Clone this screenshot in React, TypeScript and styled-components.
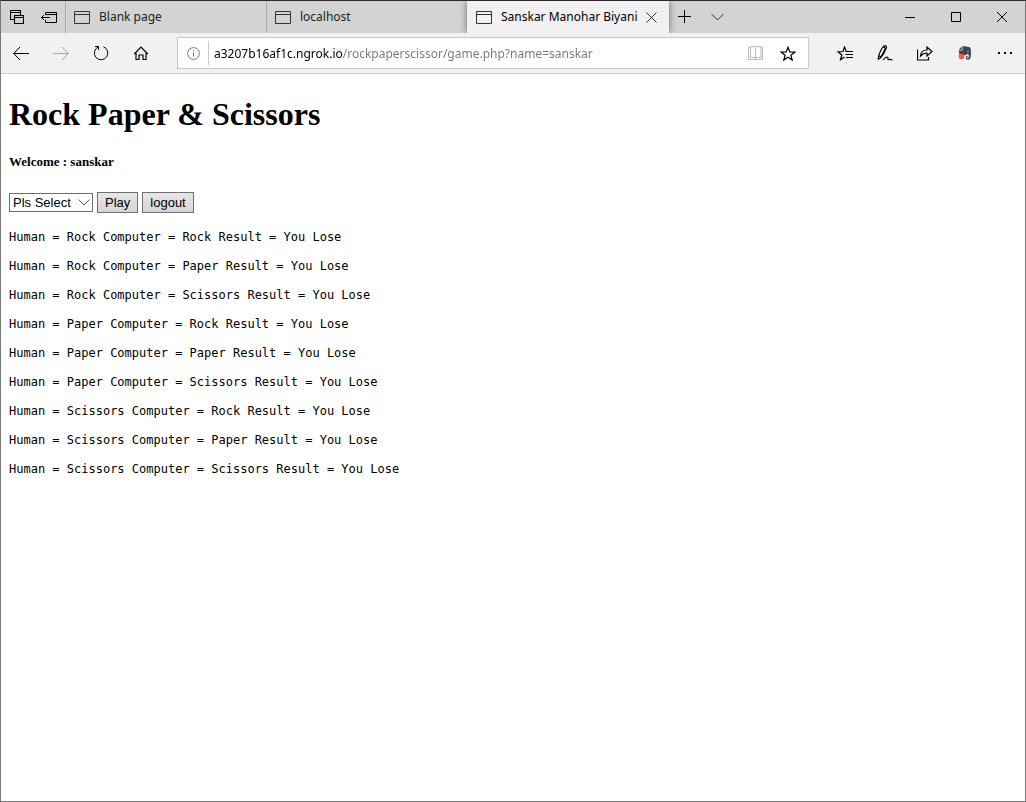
import React from "react";
import styled, { createGlobalStyle } from "styled-components";

const GlobalStyle = createGlobalStyle`
  *, *::before, *::after { box-sizing: border-box; }
  body { margin: 0; background: #fff; }
  button, input, select { margin: 0; font: inherit; color: inherit; }
`;

const Window = styled.div`
  display: flex;
  flex-direction: column;
  min-height: 100vh;
  border: 1px solid #777;
  border-top-color: #2b272b;
  background: #fff;
`;

const TitleBar = styled.header`
  display: flex;
  height: 32px;
  background: #d3d3d3;
  color: #000;
  font: 12px/16px "Noto Sans", "Open Sans", sans-serif;
`;

const TabList = styled.nav`
  display: flex;
  min-width: 0;
`;

const Tab = styled.div<{ $active?: boolean }>`
  display: flex;
  align-items: center;
  flex: 0 1 auto;
  width: ${(p) => (p.$active ? 202 : 201)}px;
  min-width: 0;
  padding-right: 5px;
  border-left: 1px solid ${(p) => (p.$active ? "#f1f1f1" : "#aaa")};
  background: ${(p) => (p.$active ? "#f1f1f1" : "transparent")};
  box-shadow: ${(p) => (p.$active ? "0 0 7px rgba(0, 0, 0, 0.5)" : "none")};
  clip-path: ${(p) => (p.$active ? "inset(0 -10px)" : "none")};
  color: ${(p) => (p.$active ? "#000" : "#222")};
`;

const TabButton = styled.button`
  display: flex;
  align-items: center;
  flex: 1;
  gap: 9px;
  min-width: 0;
  height: 100%;
  padding: 0 0 0 8px;
  border: 0;
  background: none;
  text-align: left;

  svg { flex: none; }
`;

const TabTitle = styled.span`
  flex: 1;
  overflow: hidden;
  white-space: nowrap;
`;

const IconButton = styled.button<{ $width: number; $muted?: boolean }>`
  display: flex;
  align-items: center;
  justify-content: center;
  flex: none;
  width: ${(p) => p.$width}px;
  height: 100%;
  padding: 0;
  border: 0;
  background: none;
  color: ${(p) => (p.$muted ? "#a5a5a5" : "#000")};
`;

const WindowControls = styled.div`
  display: flex;
  margin-left: auto;
`;

const Toolbar = styled.div`
  display: flex;
  align-items: center;
  gap: 16px;
  height: 41px;
  border-bottom: 1px solid #ccc;
  background: #f1f1f1;
`;

const ToolGroup = styled.div`
  display: flex;
  height: 100%;
`;

const AddressBar = styled.form`
  display: flex;
  align-items: center;
  flex: 1;
  min-width: 0;
  height: 32px;
  border: 1px solid #c8c8c8;
  background: #fff;
`;

const AddressInput = styled.input`
  flex: 1;
  min-width: 0;
  height: 24px;
  padding: 0 0 0 5px;
  border: 0;
  border-left: 1px solid #ccc;
  outline: 0;
  background: linear-gradient(to right, #000 134px, #767676 134px);
  background-clip: text;
  -webkit-background-clip: text;
  -webkit-text-fill-color: transparent;
  font: 12px/16px "Noto Sans", "Open Sans", sans-serif;
`;

const Page = styled.main`
  flex: 1;
  padding: 21px 8px;
  color: #000;
  font-family: "Liberation Serif", serif;
`;

const Heading = styled.h1`
  margin: 0 0 21px;
  font-size: 32px;
  line-height: 38px;
`;

const Welcome = styled.h2`
  margin: 0 0 22px;
  font-size: 13px;
  line-height: 16px;
`;

const GameForm = styled.form`
  display: flex;
  align-items: center;
  gap: 4px;
  margin-bottom: 16px;
  font: 13px/15px "Liberation Sans", sans-serif;
`;

const SelectBox = styled.div`
  position: relative;
  display: flex;

  svg {
    position: absolute;
    top: 6px;
    right: 3px;
    pointer-events: none;
  }
`;

const Select = styled.select`
  appearance: none;
  width: 84px;
  height: 19px;
  padding: 0 16px 0 3px;
  border: 1px solid #707070;
  border-radius: 0;
  background: #fff;
`;

const FormButton = styled.button`
  height: 21px;
  padding: 0 7px;
  border: 1px solid #707070;
  background: linear-gradient(#e6e6e6, #d6d6d6);
`;

const Results = styled.pre`
  margin: 0 0 13px;
  font: 12px/16px "DejaVu Sans Mono", monospace;
`;

type IconProps = {
  w: number;
  h: number;
  d: string;
  color?: string;
  width?: number;
};

const Icon = ({ w, h, d, color = "currentColor", width = 1 }: IconProps) => (
  <svg
    width={w}
    height={h}
    viewBox={`0 0 ${w} ${h}`}
    fill="none"
    stroke={color}
    strokeWidth={width}
    aria-hidden="true"
  >
    <path d={d} />
  </svg>
);

const PageIcon = () => <Icon w={16} h={13} d="M.5.5h15v12H.5zM1 3.5h14" color="#333" />;

const ElephantIcon = () => (
  <svg width="14" height="16" viewBox="0 0 14 16" aria-hidden="true">
    <path
      d="M4.500 1.500Q6 .5 8 1.500l3 .5q1.500.3 1.800 2.500.5 4-.2 8-.4 2.200-2.600 2.200-2.400 0-2.400-2.200 0-1.800 2-1.800v1.300q-.8 0-.8.6 0 .6.9.6 1.100 0 1.100-1.800V9.800L9.300 9 8 10.200H2.500Q1 10 .8 5.500h3.700zM3.800 1.500v3.200H.8z"
      fill="#3d474b"
    />
    <circle cx="10" cy="6.500" r=".7" fill="#b8bec0" />
    <circle cx="3.500" cy="11.500" r="2.800" fill="#ff5252" />
  </svg>
);

const STAR = "M8 1.200l1.800 4.700 5 .2-3.900 3.100 1.300 4.900L8 11.300l-4.200 2.800 1.300-4.900L1.200 6.100l5-.2z";
const MOVES = ["Rock", "Paper", "Scissors"];
const results = MOVES.flatMap((human) =>
  MOVES.map((computer) => `Human = ${human} Computer = ${computer} Result = You Lose`)
);

const keepOnPage = (event: React.FormEvent) => event.preventDefault();

export default function App() {
  return (
    <>
      <GlobalStyle />
      <Window>
        <TitleBar>
          <IconButton $width={32} aria-label="Tabs you've set aside">
            <Icon w={14} h={14} d="M4.500 5.500h9v8h-9zM4 7.500h10M4 9.500H.5V.5h10V5M0 2.500h11" width={1.1} />
          </IconButton>
          <IconButton $width={32} aria-label="Set these tabs aside">
            <Icon w={16} h={11} d="M4.500 3V.5h11v10h-11V8M4.500 2.500h11M0 5.500h9M3 3L.5 5.500 3 8" />
          </IconButton>
          <TabList aria-label="Tabs">
            <Tab>
              <TabButton><PageIcon /><TabTitle>Blank page</TabTitle></TabButton>
            </Tab>
            <Tab>
              <TabButton><PageIcon /><TabTitle>localhost</TabTitle></TabButton>
            </Tab>
            <Tab $active>
              <TabButton aria-current="page">
                <PageIcon />
                <TabTitle>Sanskar Manohar Biyani</TabTitle>
              </TabButton>
              <IconButton $width={25} aria-label="Close tab">
                <Icon w={11} h={11} d="M.5.5l10 10M10.500.5l-10 10" color="#333" />
              </IconButton>
            </Tab>
          </TabList>
          <IconButton $width={32} aria-label="New tab">
            <Icon w={14} h={14} d="M6.500 0v13M0 6.500h13" />
          </IconButton>
          <IconButton $width={32} aria-label="Show tab previews">
            <Icon w={13} h={8} d="M.5 1l6 6 6-6" color="#333" />
          </IconButton>
          <WindowControls>
            <IconButton $width={46} aria-label="Minimize"><Icon w={10} h={1} d="M0 .5h10" /></IconButton>
            <IconButton $width={46} aria-label="Maximize"><Icon w={10} h={10} d="M.5.5h9v9h-9z" /></IconButton>
            <IconButton $width={46} aria-label="Close"><Icon w={10} h={10} d="M0 0l10 10M10 0L0 10" /></IconButton>
          </WindowControls>
        </TitleBar>

        <Toolbar>
          <ToolGroup>
            <IconButton $width={40} aria-label="Back"><Icon w={16} h={14} d="M1 7.500h15M7 1L.7 7.500 7 14" /></IconButton>
            <IconButton $width={40} $muted aria-label="Forward"><Icon w={16} h={14} d="M0 7.500h15M9 1l6.300 6.500L9 14" /></IconButton>
            <IconButton $width={40} aria-label="Refresh">
              <Icon w={16} h={16} d="M10.500 1.800A6.700 6.700 0 1 1 5.200 2M2 1.500h3.500V5" />
            </IconButton>
            <IconButton $width={40} aria-label="Home">
              <Icon w={16} h={15} d="M1.200 8L8 1.200 14.800 8M3 7v6.500h3V9h4v4.500h3V7" width={1.200} />
            </IconButton>
          </ToolGroup>
          <AddressBar onSubmit={keepOnPage}>
            <IconButton $width={30} $muted type="button" aria-label="Site information">
              <svg width="13" height="13" viewBox="0 0 13 13" fill="none" stroke="#777" aria-hidden="true">
                <circle cx="6.500" cy="6.500" r="5.900" />
                <path d="M6.500 5.500v4M6.500 3v1.200" />
              </svg>
            </IconButton>
            <AddressInput
              aria-label="Address"
              defaultValue="a3207b16af1c.ngrok.io/rockpaperscissor/game.php?name=sanskar"
            />
            <IconButton $width={24} type="button" aria-label="Reading view">
              <Icon w={16} h={14} d="M7.500 1.500L7 .5H2.500v11H7l.5 1 .5-1h5V.5H8l-.5 1v11M2.500 1.500h-2v12h14v-12h-2" color="#bbb" />
            </IconButton>
            <IconButton $width={40} type="button" aria-label="Add to favorites">
              <Icon w={16} h={15} d={STAR} width={1.200} />
            </IconButton>
          </AddressBar>
          <ToolGroup>
            <IconButton $width={40} aria-label="Favorites">
              <Icon w={17} h={15} d="M9.200 5L7.500 1 6 5.500l-5 .3 3.800 3.200-1.300 4.800L7.500 11M8.500 5.500H16M8.500 8.500H16M9 11.500h7" width={1.200} />
            </IconButton>
            <IconButton $width={40} aria-label="Add notes">
              <Icon w={16} h={16} d="M1 14.500l.8-4Q4 4 6.700 1.200 8 .2 9 1q.8.8.3 2Q7 9 4 12.500L1 14.500M6.500 2l2 1.300L4 11.800M1.800 10.500l2.200 1.800M6 15q2.500-3 4-3t.8 2q.2 1.200 1.500.6t3.200.4" width={1.100} />
            </IconButton>
            <IconButton $width={40} aria-label="Share">
              <Icon w={16} h={15} d="M.5 3.500v10.500h11V11M3.500 10Q4 4 10 4V1l5 4.500L10 10V7Q6 7 3.500 10z" width={1.200} />
            </IconButton>
            <IconButton $width={40} aria-label="Web clipper"><ElephantIcon /></IconButton>
            <IconButton $width={40} aria-label="Settings and more">
              <Icon w={14} h={2} d="M0 1h2M6 1h2M12 1h2" width={2} />
            </IconButton>
          </ToolGroup>
        </Toolbar>

        <Page>
          <Heading>Rock Paper &amp; Scissors</Heading>
          <Welcome>Welcome : sanskar</Welcome>
          <GameForm onSubmit={keepOnPage}>
            <SelectBox>
              <Select aria-label="Move" defaultValue="">
                <option value="">Pls Select</option>
                {MOVES.map((move) => <option key={move}>{move}</option>)}
              </Select>
              <Icon w={12} h={7} d="M.5.5L6 6 11.500.5" color="#555" />
            </SelectBox>
            <FormButton type="submit">Play</FormButton>
            <FormButton type="button">logout</FormButton>
          </GameForm>
          {results.map((line) => <Results key={line}>{line}</Results>)}
        </Page>
      </Window>
    </>
  );
}
